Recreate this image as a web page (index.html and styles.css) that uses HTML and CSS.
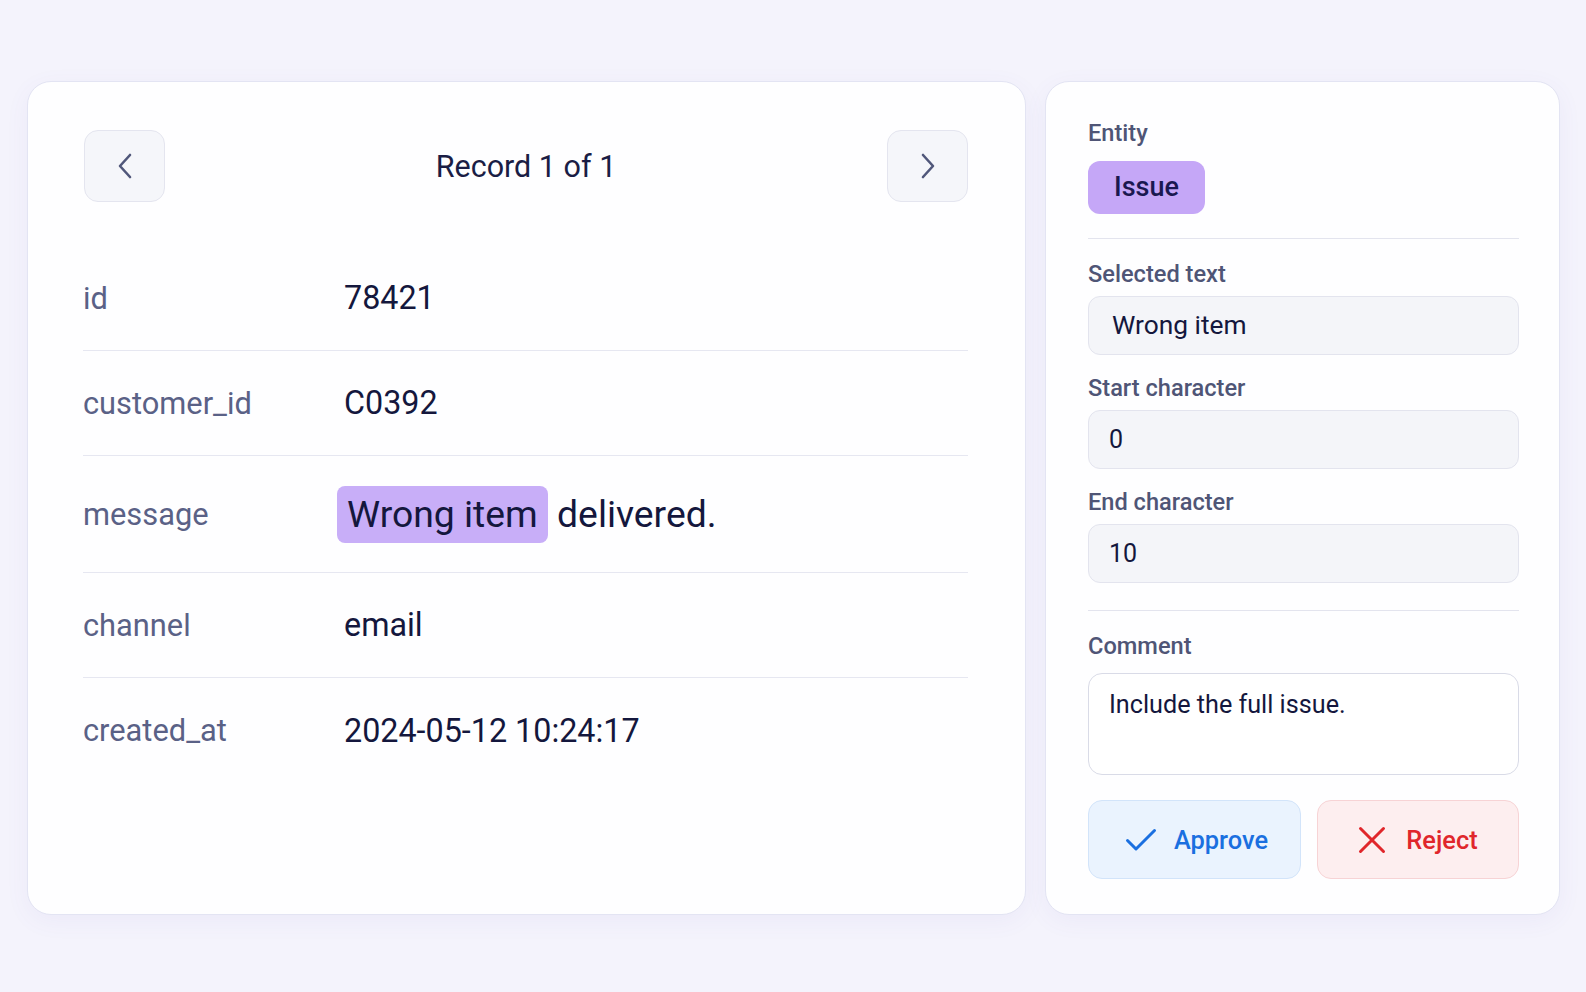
FILE: index.html
```html
<!DOCTYPE html>
<html lang="en">
<head>
<meta charset="utf-8">
<title>Record review</title>
<link rel="stylesheet" href="styles.css">
</head>
<body>
<main class="page">
  <section class="card record">
    <header class="record-head">
      <button class="nav-btn" aria-label="Previous record">
        <svg width="16" height="26" viewBox="0 0 16 26"><path d="M13 2 L3 13 L13 24" fill="none" stroke="#50577a" stroke-width="2.6" stroke-linecap="round" stroke-linejoin="round"/></svg>
      </button>
      <h1 class="record-title">Record 1 of 1</h1>
      <button class="nav-btn" aria-label="Next record">
        <svg width="16" height="26" viewBox="0 0 16 26"><path d="M3 2 L13 13 L3 24" fill="none" stroke="#50577a" stroke-width="2.6" stroke-linecap="round" stroke-linejoin="round"/></svg>
      </button>
    </header>
    <dl class="fields">
      <div class="row"><dt>id</dt><dd>78421</dd></div>
      <div class="row"><dt>customer_id</dt><dd>C0392</dd></div>
      <div class="row row-msg"><dt>message</dt><dd class="msg"><span class="hl">Wrong item</span> delivered.</dd></div>
      <div class="row"><dt>channel</dt><dd>email</dd></div>
      <div class="row last"><dt>created_at</dt><dd>2024-05-12 10:24:17</dd></div>
    </dl>
  </section>

  <aside class="card panel">
    <div class="group">
      <div class="plabel">Entity</div>
      <span class="chip">Issue</span>
    </div>
    <div class="group bordered">
      <div class="plabel">Selected text</div>
      <div class="input sel">Wrong item</div>
      <div class="plabel">Start character</div>
      <div class="input">0</div>
      <div class="plabel">End character</div>
      <div class="input">10</div>
    </div>
    <div class="group bordered">
      <div class="plabel">Comment</div>
      <div class="textarea">Include the full issue.</div>
      <div class="actions">
        <button class="btn approve">
          <svg width="32" height="26" viewBox="0 0 32 26"><path d="M2.5 13.5 L11 22 L29.5 3.5" fill="none" stroke="#1a6fe0" stroke-width="3" stroke-linecap="round" stroke-linejoin="round"/></svg>
          <span>Approve</span>
        </button>
        <button class="btn reject">
          <svg width="28" height="28" viewBox="0 0 28 28"><path d="M2.5 2.5 L25.5 25.5 M25.5 2.5 L2.5 25.5" fill="none" stroke="#e0262b" stroke-width="3" stroke-linecap="round"/></svg>
          <span>Reject</span>
        </button>
      </div>
    </div>
  </aside>
</main>
</body>
</html>
```

FILE: styles.css
```css
* { box-sizing: border-box; }
html, body { margin: 0; padding: 0; }
body {
  background: #f4f3fc;
  font-family: Roboto, "Liberation Sans", sans-serif;
  color: #14173d;
  width: 1586px;
  height: 992px;
  overflow: hidden;
}
.page {
  display: grid;
  grid-template-columns: 1fr 515px;
  gap: 19px;
  padding: 81px 26px 77px 27px;
  height: 992px;
}
.card {
  background: #fefeff;
  border: 1px solid #e3e4f3;
  border-radius: 24px;
  box-shadow: 0 6px 24px rgba(100, 90, 190, 0.06);
}
.record {
  padding: 48px 57px 0 55px;
}
.record-head {
  display: flex;
  align-items: center;
  justify-content: space-between;
  padding-left: 1px;
}
.nav-btn {
  width: 81px;
  height: 72px;
  border: 1px solid #e4e5ef;
  background: #f5f6fa;
  border-radius: 14px;
  display: flex;
  align-items: center;
  justify-content: center;
  padding: 0;
}
.record-title {
  margin: 0;
  font-size: 30.5px;
  font-weight: 400;
  color: #1a1d45;
}
.fields {
  margin: 44px 0 0;
}
.row {
  display: grid;
  grid-template-columns: 261px 1fr;
  align-items: center;
  min-height: 105px;
  padding: 0;
  border-bottom: 1px solid #e6e7f1;
}
.row.last { border-bottom: none; }
.row-msg { min-height: 117px; }
.row dt {
  font-size: 30.8px;
  color: #5a6186;
}
.row dd {
  margin: 0;
  font-size: 32.3px;
  color: #14173d;
}
.row dd.msg {
  font-size: 37.3px;
  margin-left: -7px;
}
.hl {
  display: inline-block;
  background: #c8aef8;
  border-radius: 8px;
  padding: 6px 10px 7px;
  line-height: 44px;
}
.panel {
  padding: 37px 40px 35px 42px;
  display: flex;
  flex-direction: column;
}
.group { display: flex; flex-direction: column; }
.bordered {
  border-top: 1px solid #e3e4ee;
  margin-top: 24px;
  padding-top: 21px;
}
.group + .group.bordered:last-child { margin-top: 27px; }
.plabel {
  font-size: 23.6px;
  font-weight: 500;
  line-height: 28px;
  color: #4f5576;
  margin-bottom: 8px;
}
.chip {
  align-self: flex-start;
  margin-top: 6px;
  background: #c5a7f7;
  border-radius: 12px;
  height: 53px;
  line-height: 53px;
  padding: 0 26px;
  font-size: 27px;
  font-weight: 500;
  color: #1a1850;
}
.input {
  height: 59px;
  line-height: 57px;
  border: 1px solid #e3e4ee;
  background: #f4f5f9;
  border-radius: 12px;
  padding: 0 20px;
  font-size: 25px;
  color: #14173d;
  margin-bottom: 19px;
}
.input.sel { padding-left: 23px; font-size: 26.3px; }
.input:last-child { margin-bottom: 0; }
.textarea {
  margin-top: 5px;
  height: 102px;
  border: 1px solid #d9dbe7;
  background: #fff;
  border-radius: 14px;
  padding: 16px 20px;
  font-size: 25.2px;
  line-height: 30px;
  color: #14173d;
}
.actions {
  display: flex;
  gap: 16px;
  margin-top: 25px;
}
.btn {
  flex: 1;
  height: 79px;
  border-radius: 14px;
  display: flex;
  align-items: center;
  justify-content: center;
  gap: 17px;
  font-family: Roboto, "Liberation Sans", sans-serif;
  font-size: 25.4px;
  font-weight: 500;
  padding: 0;
}
.approve {
  flex: 211;
  background: #eaf3fe;
  border: 1px solid #d2e4fa;
  color: #1a6fe0;
  padding-left: 4px;
}
.reject {
  flex: 204;
  background: #fdeeef;
  border: 1px solid #f7d3d5;
  color: #e0262b;
  gap: 20px;
}
```
